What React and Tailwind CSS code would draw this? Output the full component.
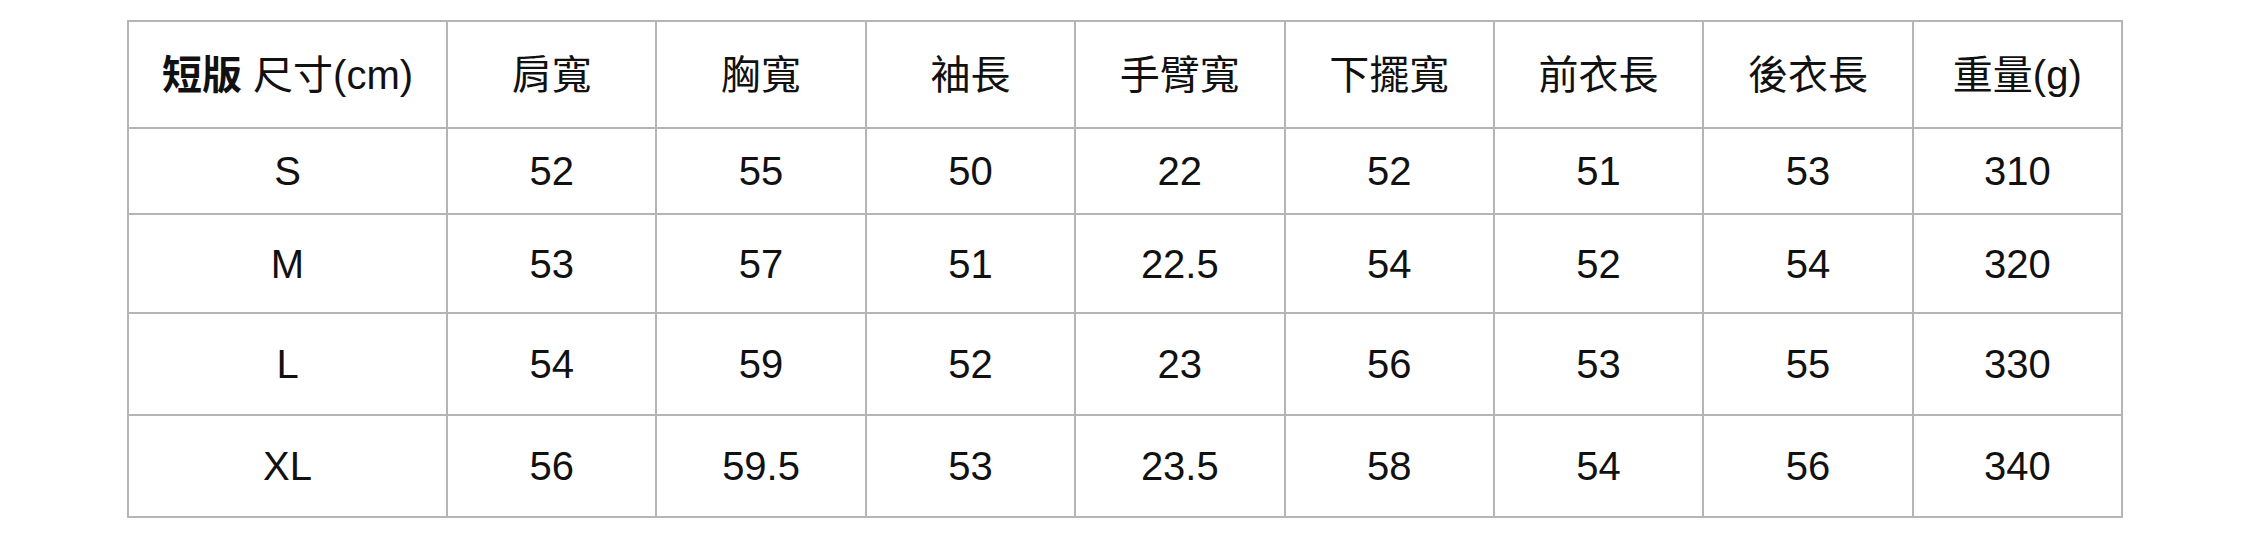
const headers = ['肩寬', '胸寬', '袖長', '手臂寬', '下擺寬', '前衣長', '後衣長', '重量(g)'];

const rows = [
  { size: 'S', h: 'h-[86px]', values: ['52', '55', '50', '22', '52', '51', '53', '310'] },
  { size: 'M', h: 'h-[99px]', values: ['53', '57', '51', '22.5', '54', '52', '54', '320'] },
  { size: 'L', h: 'h-[102px]', values: ['54', '59', '52', '23', '56', '53', '55', '330'] },
  { size: 'XL', h: 'h-[102px]', values: ['56', '59.5', '53', '23.5', '58', '54', '56', '340'] },
];

export default function App() {
  return (
    <div
      className="w-[2250px] h-[558px] bg-white pt-[20px] text-[#111]"
      style={{ fontFamily: "'Liberation Sans', 'Noto Sans CJK TC', sans-serif" }}
    >
      <table className="mx-auto w-[1996px] table-fixed border-collapse text-[40px] leading-none">
        <colgroup>
          <col className="w-[319px]" />
          {headers.map((h) => (
            <col key={h} />
          ))}
        </colgroup>
        <thead>
          <tr className="h-[107px]">
            <th className="border-2 border-[#b5b5b5] text-center font-normal">
              <span className="font-bold">短版</span> 尺寸(cm)
            </th>
            {headers.map((h) => (
              <th key={h} className="border-2 border-[#b5b5b5] text-center font-normal">
                {h}
              </th>
            ))}
          </tr>
        </thead>
        <tbody>
          {rows.map((r) => (
            <tr key={r.size} className={r.h}>
              <td className="border-2 border-[#b5b5b5] text-center">{r.size}</td>
              {r.values.map((v, i) => (
                <td key={i} className="border-2 border-[#b5b5b5] text-center">
                  {v}
                </td>
              ))}
            </tr>
          ))}
        </tbody>
      </table>
    </div>
  );
}
